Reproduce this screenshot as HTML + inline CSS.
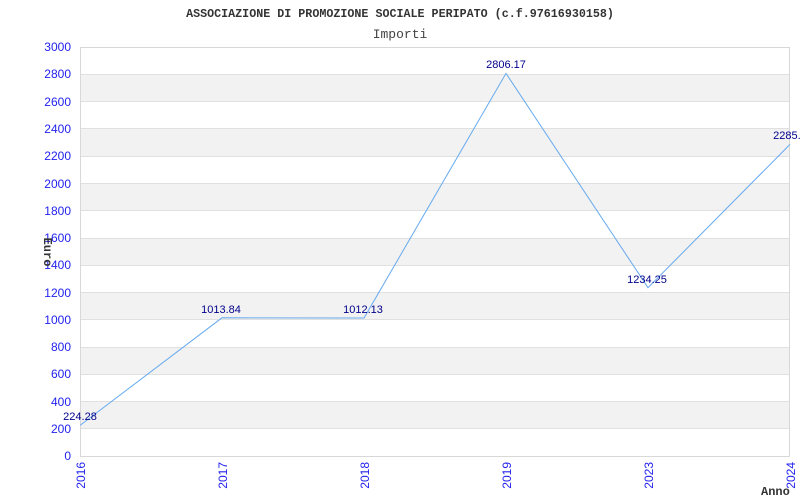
<!DOCTYPE html>
<html><head><meta charset="utf-8"><style>
html,body{margin:0;padding:0;background:#fff;width:800px;height:500px;overflow:hidden}
</style></head><body>
<svg width="800" height="500" xmlns="http://www.w3.org/2000/svg" font-family="Liberation Sans, sans-serif">
<rect width="800" height="500" fill="#fff"/>
<g fill="#f2f2f2">
<rect x="80" y="74.3" width="710" height="27.3"/>
<rect x="80" y="128.8" width="710" height="27.3"/>
<rect x="80" y="183.4" width="710" height="27.3"/>
<rect x="80" y="237.9" width="710" height="27.3"/>
<rect x="80" y="292.4" width="710" height="27.3"/>
<rect x="80" y="347" width="710" height="27.3"/>
<rect x="80" y="401.5" width="710" height="27.3"/>
</g>
<g stroke="#e0e0e0" stroke-width="1">
<line x1="80" x2="790" y1="74.5" y2="74.5"/><line x1="80" x2="790" y1="101.5" y2="101.5"/>
<line x1="80" x2="790" y1="128.5" y2="128.5"/><line x1="80" x2="790" y1="156.5" y2="156.5"/>
<line x1="80" x2="790" y1="183.5" y2="183.5"/><line x1="80" x2="790" y1="210.5" y2="210.5"/>
<line x1="80" x2="790" y1="238.5" y2="238.5"/><line x1="80" x2="790" y1="265.5" y2="265.5"/>
<line x1="80" x2="790" y1="292.5" y2="292.5"/><line x1="80" x2="790" y1="319.5" y2="319.5"/>
<line x1="80" x2="790" y1="347.5" y2="347.5"/><line x1="80" x2="790" y1="374.5" y2="374.5"/>
<line x1="80" x2="790" y1="401.5" y2="401.5"/><line x1="80" x2="790" y1="428.5" y2="428.5"/>
</g>
<rect x="80.5" y="47.5" width="709" height="409" fill="none" stroke="#d8d8d8"/>
<polyline fill="none" stroke="#66aaee" stroke-width="1" points="80,425.4 222,317.8 364,318 506,73.4 648,287.7 790,144.4"/>
<g fill="#00008b" font-size="11" text-anchor="middle">
<text x="80" y="420">224.28</text>
<text x="221" y="313">1013.84</text>
<text x="363" y="313">1012.13</text>
<text x="506" y="68">2806.17</text>
<text x="647" y="283">1234.25</text>
<text x="790" y="139">2285.5</text>
</g>
<g fill="#2222ee" font-size="12" text-anchor="end">
<text x="71" y="51">3000</text><text x="71" y="78">2800</text><text x="71" y="106">2600</text>
<text x="71" y="133">2400</text><text x="71" y="160">2200</text><text x="71" y="188">2000</text>
<text x="71" y="215">1800</text><text x="71" y="242">1600</text><text x="71" y="269">1400</text>
<text x="71" y="297">1200</text><text x="71" y="324">1000</text><text x="71" y="351">800</text>
<text x="71" y="378">600</text><text x="71" y="406">400</text><text x="71" y="433">200</text>
<text x="71" y="460">0</text>
</g>
<g fill="#2222ee" font-size="12" text-anchor="end">
<text transform="translate(85,462) rotate(-90)">2016</text>
<text transform="translate(227,462) rotate(-90)">2017</text>
<text transform="translate(369,462) rotate(-90)">2018</text>
<text transform="translate(511,462) rotate(-90)">2019</text>
<text transform="translate(653,462) rotate(-90)">2023</text>
<text transform="translate(795,462) rotate(-90)">2024</text>
</g>
<text x="400" y="17" text-anchor="middle" font-family="Liberation Mono, monospace" font-weight="bold" font-size="11.7" fill="#333">ASSOCIAZIONE DI PROMOZIONE SOCIALE PERIPATO (c.f.97616930158)</text>
<text x="400" y="38" text-anchor="middle" font-family="Liberation Mono, monospace" font-size="13" fill="#444">Importi</text>
<text transform="translate(44,252) rotate(90)" text-anchor="middle" font-family="Liberation Mono, monospace" font-weight="bold" font-size="12" fill="#333">Euro</text>
<text x="761" y="495" font-family="Liberation Mono, monospace" font-weight="bold" font-size="12" fill="#333">Anno</text>
</svg>
</body></html>
